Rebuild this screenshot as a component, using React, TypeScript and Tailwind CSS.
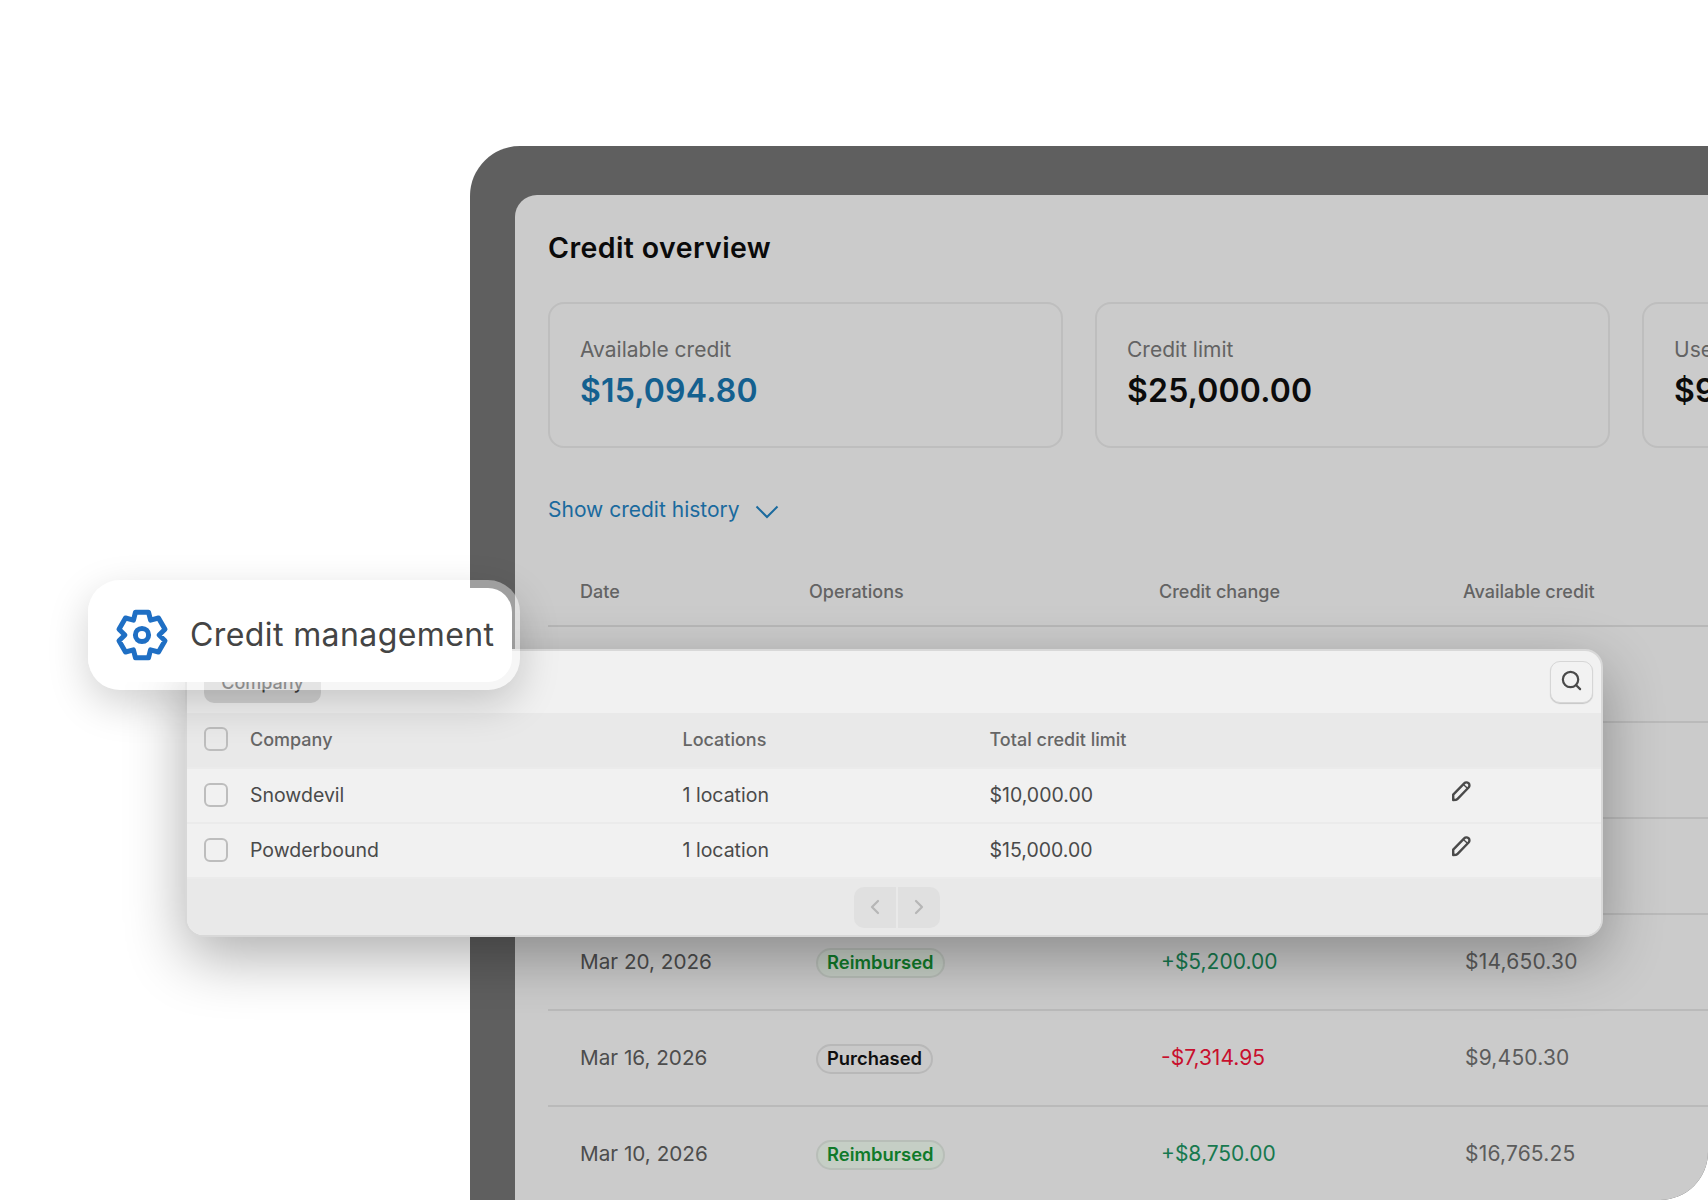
import { ChevronLeft, ChevronRight, Search } from "lucide-react";

const INTER = "font-['Inter',sans-serif]";

const history = [
  { date: "", status: "", change: "", balance: "" },
  { date: "", status: "", change: "", balance: "" },
  { date: "", status: "", change: "", balance: "" },
  { date: "Mar 20, 2026", status: "Reimbursed", change: "+$5,200.00", balance: "$14,650.30" },
  { date: "Mar 16, 2026", status: "Purchased", change: "-$7,314.95", balance: "$9,450.30" },
  { date: "Mar 10, 2026", status: "Reimbursed", change: "+$8,750.00", balance: "$16,765.25" },
];

const companies = [
  { name: "Snowdevil", locations: "1 location", limit: "$10,000.00" },
  { name: "Powderbound", locations: "1 location", limit: "$15,000.00" },
];

function gearPath() {
  const base = [
    [-6.5, -22.8],
    [6.5, -22.8],
    [8.6, -14.8],
  ];
  const pts: string[] = [];
  for (let i = 0; i < 6; i++) {
    const a = (i * Math.PI) / 3;
    for (const [x, y] of base) {
      pts.push(`${(26 + x * Math.cos(a) - y * Math.sin(a)).toFixed(2)} ${(26 + x * Math.sin(a) + y * Math.cos(a)).toFixed(2)}`);
    }
  }
  return `M${pts.join("L")}Z`;
}

function GearIcon() {
  return (
    <svg width="52" height="52" viewBox="0 0 52 52" fill="none" stroke="#1f6fc4" strokeWidth="5" strokeLinejoin="round" className="overflow-visible">
      <path d={gearPath()} />
      <circle cx="26" cy="26" r="6.6" />
    </svg>
  );
}

function PencilIcon() {
  return (
    <svg width="22" height="22" viewBox="0 0 22 22" fill="none" stroke="#4a4a4a" strokeWidth="2.4" strokeLinejoin="round">
      <path d="M3.2 14.6 14.2 3.3a3 3 0 0 1 4.4 4.2L7.6 18.9c-.5.5-1 .7-1.6.8l-2.8.4z" />
      <path d="M13.4 4.4l4.3 4.1" strokeWidth="1.4" />
    </svg>
  );
}

function StatCard({ label, value, accent }: { label: string; value: string; accent?: boolean }) {
  return (
    <div className="flex h-[146px] w-[515px] shrink-0 flex-col justify-center rounded-[16px] border-2 border-[#bebebe] pl-[30px]">
      <span className="-mt-[3px] text-[21px] leading-[28px] text-[#636363]">{label}</span>
      <span className={"mt-[7px] text-[32px] font-semibold leading-[40px] tracking-[0.2px] " + (accent ? "text-[#14608f]" : "text-[#0b0b0b]")}>
        {value}
      </span>
    </div>
  );
}

function Status({ text }: { text: string }) {
  const paid = text === "Reimbursed";
  return (
    <span
      className={
        "ml-[7px] inline-flex h-[30px] items-center rounded-full border-2 px-[9px] text-[18.4px] font-semibold " +
        (paid ? "border-[#b8beb8] bg-[#c5cec5] text-[#107a2a]" : "border-[#b8b8b8] bg-[#c9c9c9] text-[#0f0f0f]")
      }
    >
      {text}
    </span>
  );
}

function Checkbox() {
  return <span className="-mt-[1px] ml-[1px] block h-[24px] w-[24px] rounded-[6px] border-2 border-[#bdbdbd]" />;
}

export default function App() {
  return (
    <div className={"relative h-[1200px] w-[1708px] overflow-hidden bg-white pt-[146px] pl-[470px] " + INTER}>
      <main className="h-[1054px] overflow-hidden rounded-tl-[50px] rounded-br-[48px] bg-[#5f5f5f] pt-[49px] pl-[45px]">
        <div className="h-full rounded-tl-[22px] bg-[#cbcbcb] pl-[33px]">
          <h1 className="pt-[35px] text-[28.5px] font-semibold leading-[36px] tracking-[0.4px] text-[#0a0a0a]">Credit overview</h1>

          <div className="mt-[36px] flex gap-[32px]">
            <StatCard label="Available credit" value="$15,094.80" accent />
            <StatCard label="Credit limit" value="$25,000.00" />
            <StatCard label="Used credit" value="$9,905.20" />
          </div>

          <div className="mt-[48px] flex items-center gap-[15px] text-[21px] leading-[28px] text-[#1a6a9e]">
            <span>Show credit history</span>
            <svg width="24" height="14" viewBox="0 0 24 14" fill="none" stroke="currentColor" strokeWidth="2" className="mt-[3px]">
              <path d="M1.5 1.5 12 12 22.5 1.5" />
            </svg>
          </div>

          <div className="mt-[39px] grid h-[64px] grid-cols-[229px_350px_1fr] items-center border-b-2 border-[#b8b8b8] pb-[6px] pl-[32px] text-[18px] font-medium text-[#636363]">
            <span>Date</span>
            <span>Operations</span>
            <span className="flex">
              <span className="w-[304px]">Credit change</span>
              <span>Available credit</span>
            </span>
          </div>

          {history.map((row, i) => (
            <div key={i} className="grid h-[96px] grid-cols-[229px_350px_1fr] items-center border-b-2 border-[#bababa] pl-[32px] text-[21px]">
              <span className="text-[20.7px] text-[#4d4d4d]">{row.date}</span>
              <span>{row.status && <Status text={row.status} />}</span>
              <span className="flex">
                <span className={"ml-[2px] w-[304px] " + (row.change.startsWith("-") ? "text-[#c8102e]" : "text-[#17794f]")}>{row.change}</span>
                <span className="tracking-[0.2px] text-[#5c5c5c]">{row.balance}</span>
              </span>
            </div>
          ))}
        </div>
      </main>

      {/* table card sits on top of the credit page */}
      <section className="absolute top-[649px] left-[185px] flex h-[288px] w-[1418px] flex-col overflow-hidden rounded-[18px] border-2 border-[#d8d8d8] bg-[#f1f1f1] shadow-[0_20px_60px_rgba(0,0,0,0.32)]">
        <div className="flex h-[62px] shrink-0 items-start justify-between pl-[17px] pr-[8px] pt-[10px]">
          <span className="mt-[3px] flex h-[39px] w-[117px] items-center justify-center rounded-[10px] bg-[#d2d2d2] pb-[3px] text-[18px] font-medium text-[#3f3f3f]">Company</span>
          <span className="flex h-[42px] w-[43px] items-center justify-center rounded-[10px] border border-[#d6d6d6] bg-[#f2f2f2] shadow-[0_1px_1px_rgba(0,0,0,0.18)]">
            <Search size={23} strokeWidth={2.3} className="-mt-[3px] text-[#4a4a4a]" />
          </span>
        </div>
        <div className="grid h-[54px] shrink-0 grid-cols-[47px_432.5px_307px_1fr] items-center bg-[#e9e9e9] pb-[1px] pl-[16px] text-[18px] font-medium text-[#666]">
          <Checkbox />
          <span>Company</span>
          <span>Locations</span>
          <span>Total credit limit</span>
        </div>
        {companies.map((c) => (
          <div key={c.name} className="grid h-[55px] shrink-0 grid-cols-[47px_432.5px_307px_460px_1fr] items-center border-t-2 border-[#ebebeb] pl-[16px] text-[19.5px] text-[#4a4a4a]">
            <Checkbox />
            <span>{c.name}</span>
            <span>{c.locations}</span>
            <span>{c.limit}</span>
            <span className="-mt-[10px]">
              <PencilIcon />
            </span>
          </div>
        ))}
        <div className="flex flex-1 items-center justify-center border-t-2 border-[#ebebeb] bg-[#e9e9e9]">
          <div className="ml-[6px] flex gap-[2px]">
            <span className="flex h-[41px] w-[42px] items-center justify-center rounded-l-[10px] bg-[#e0e0e0]">
              <ChevronLeft size={24} strokeWidth={2.2} className="text-[#b6b6b6]" />
            </span>
            <span className="flex h-[41px] w-[42px] items-center justify-center rounded-r-[10px] bg-[#e0e0e0]">
              <ChevronRight size={24} strokeWidth={2.2} className="text-[#b6b6b6]" />
            </span>
          </div>
        </div>
      </section>

      {/* floating label */}
      <div className="absolute top-[580px] left-[88px] h-[110px] w-[432px] rounded-[32px] bg-white/40 pr-[8px] pt-[8px] pb-[8px] shadow-[0_14px_40px_rgba(0,0,0,0.18)]">
        <div className="flex h-full items-center gap-[22px] rounded-[24px] bg-white pl-[28px]">
          <GearIcon />
          <span className="text-[32px] leading-[40px] tracking-[0.4px] text-[#444444]">Credit management</span>
        </div>
      </div>
    </div>
  );
}
